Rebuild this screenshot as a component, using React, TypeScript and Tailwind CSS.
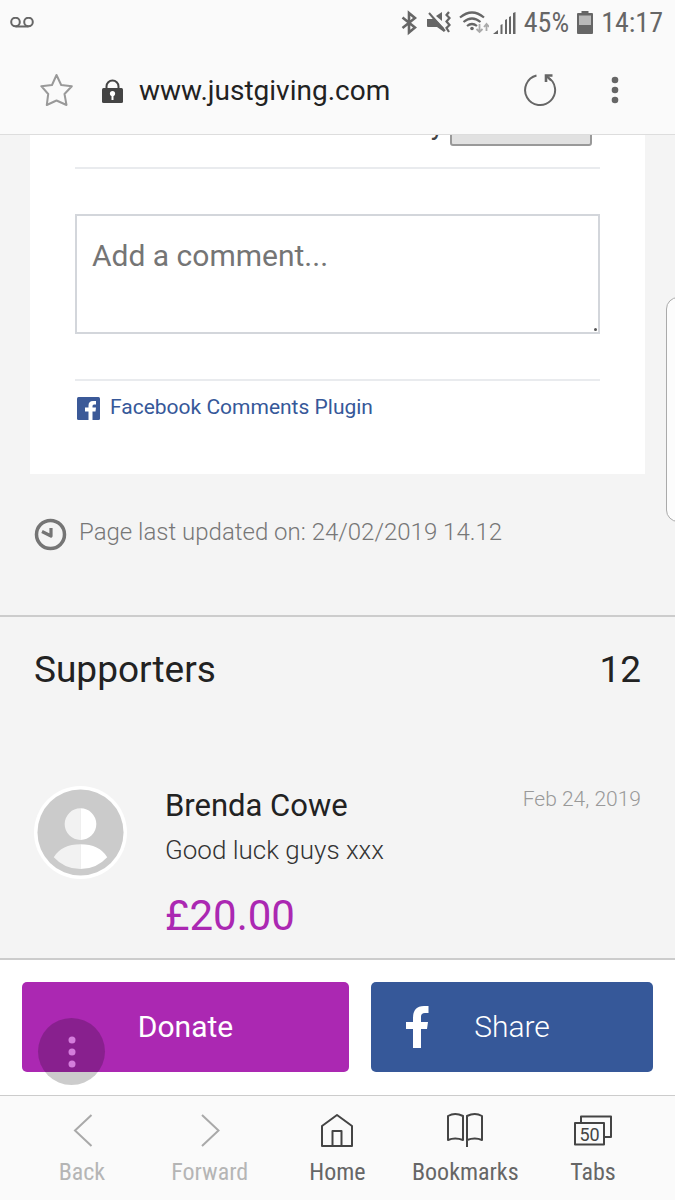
import type { ReactNode } from "react";

function StatusBar() {
  return (
    <div className="flex h-[46px] items-center justify-between pl-[10px] pr-3 text-[#666]">
      <svg width="24" height="12" viewBox="0 0 24 12" fill="none" stroke="currentColor" strokeWidth="2" aria-label="Voicemail">
        <circle cx="5.5" cy="5" r="4.3" />
        <circle cx="18.5" cy="5" r="4.3" />
        <path d="M5.500 9.500h13" />
      </svg>
      <div className="flex items-center gap-2">
        <svg width="16" height="26" viewBox="0 0 16 26" className="mr-[2px]" fill="none" stroke="currentColor" strokeWidth="2.600" aria-label="Bluetooth">
          <path d="M1.500 7.500L14 17.500l-6 5V3l6 5L1.500 18" />
        </svg>
        <svg width="24" height="24" viewBox="0 0 24 24" aria-label="Sound off, vibrate">
          <path d="M0 8h5l2-1 10 10v4l-7-5H1q-1 0-1-1z" fill="currentColor" />
          <path d="M9 5l6-4v9z" fill="currentColor" />
          <path d="M2 2l16 18" stroke="currentColor" strokeWidth="2" />
          <path d="M22 1l-2.500 3 3 3-3 3.500 3 3.500-3 3 2.500 4" fill="none" stroke="currentColor" strokeWidth="2.200" />
        </svg>
        <div className="flex items-center gap-1">
          <svg width="30" height="24" viewBox="0 0 30 24" fill="none" stroke="currentColor" strokeWidth="2.200" aria-label="Wi-Fi">
            <path d="M1 6.500Q13 -3.500 25 6.500M4.500 11Q13 4 21.500 11M8 15Q13 11 18 15" />
            <circle cx="13" cy="17.500" r="1.800" fill="currentColor" stroke="none" />
            <path d="M20.500 13v8m-3-3l3 3 3-3M27.500 20v-7m-2.500 3l2.500-3 2.500 3" stroke="#aaa" strokeWidth="1.800" />
          </svg>
          <svg width="23" height="24" viewBox="0 0 23 24" fill="currentColor" aria-label="Signal">
            <path d="M0 23l5-4v4zM7.500 14l2-1v10h-2zM12 9l2-1v15h-2zM16 6l2-1v18h-2zM20 2l2.500-1v22H20z" />
          </svg>
        </div>
        <span className="font-['Roboto_Condensed',Roboto,sans-serif] text-[28px] leading-8">45%</span>
        <svg width="16" height="24" viewBox="0 0 16 24" aria-label="Battery">
          <path d="M4.500 0h7v2H15q1 0 1 1v19q0 1-1 1H1q-1 0-1-1V3q0-1 1-1h3.500z" fill="currentColor" />
          <path d="M2 4.500h12V14H2z" fill="#b9b9b9" />
        </svg>
        <span className="font-['Roboto_Condensed',Roboto,sans-serif] text-[28px] leading-8">14:17</span>
      </div>
    </div>
  );
}

function AddressBar() {
  return (
    <div className="flex h-[88px] items-center pl-10 pr-14">
      <button type="button" aria-label="Add bookmark" className="text-[#999]">
        <svg width="33" height="34" viewBox="0 0 33 34" fill="none" stroke="currentColor" strokeWidth="2" strokeLinejoin="round">
          <path d="M16.500 2l4.700 10 10.600 1.200-7.300 7.800 2 11-10-4.500-9.700 4.500 1.400-11L1.300 13.200 12 12z" />
        </svg>
      </button>
      <div className="ml-[29px] flex min-w-0 flex-1 items-center gap-4 pt-[2px]">
        <svg width="21" height="25" viewBox="0 0 21 25" aria-label="Secure">
          <path d="M4.500 10V7.500a6 6 0 0 1 12 0V10" fill="none" stroke="#444" strokeWidth="2" />
          <rect y="9" width="21" height="15" rx="1.500" fill="#444" />
          <circle cx="10.500" cy="14.500" r="2.600" fill="#fff" />
          <path d="M9.500 14.500h2V21h-2z" fill="#fff" />
        </svg>
        <span className="text-[28px] leading-9 text-[#222]">www.justgiving.com</span>
      </div>
      <button type="button" aria-label="Reload" className="text-[#666]">
        <svg width="33" height="34" viewBox="0 0 33 34" fill="none" stroke="currentColor" strokeWidth="2">
          <path d="M12.500 2.500A15 15 0 1 0 23.500 4" />
          <path d="M28.500 2.500H22V9" strokeWidth="2.600" />
          <path d="M22 2.500l5 5" />
        </svg>
      </button>
      <button type="button" aria-label="More options" className="ml-[54px] text-[#666]">
        <svg width="8" height="28" viewBox="0 0 8 28" fill="currentColor">
          <circle cx="4" cy="4" r="3.300" />
          <circle cx="4" cy="14" r="3.300" />
          <circle cx="4" cy="24" r="3.300" />
        </svg>
      </button>
    </div>
  );
}

function Comments() {
  return (
    <section className="mx-[30px] bg-white px-[45px] pb-[52px]">
      <div className="flex h-[34px] items-end justify-end gap-[6px] overflow-hidden border-b-2 border-[#e9ebee] pb-[21px] pr-2">
        <label htmlFor="order" className="mb-[3px] text-[28px] leading-9 text-[#444]">Sort by</label>
        <select id="order" className="h-10 w-[142px] shrink-0 appearance-none rounded-[3px] border-2 border-[#999] bg-[#e1e1e1]" />
      </div>
      <div className="relative mt-[45px]">
        <textarea
          aria-label="Add a comment"
          placeholder="Add a comment..."
          className="block h-[120px] w-full resize-none rounded-none border-2 border-[#d3d6db] bg-white px-[15px] py-[22px] text-[30px] leading-9 placeholder:text-[#757575]"
        />
        <span className="absolute bottom-[3px] right-[3px] size-[3px] rounded-full bg-[#555]" />
      </div>
      <div className="mt-[45px] flex items-center gap-[10px] border-t-2 border-[#e9ebee] pb-[2px] pl-[2px] pt-3">
        <svg width="23" height="23" viewBox="0 0 23 23" className="mt-1" aria-hidden="true">
          <rect width="23" height="23" rx="1.500" fill="#3b5998" />
          <path d="M11.500 23v-8.500H8v-4h3.500V8.500q0-4.500 4.500-4.500h3v3.500h-2q-1.500 0-1.500 1.500v1.500h3.500l-.5 4h-3V23z" fill="#fff" />
        </svg>
        <a href="#plugin" className="text-[21px] leading-[26px] text-[#365899]">Facebook Comments Plugin</a>
      </div>
    </section>
  );
}

function Supporter() {
  return (
    <article className="mt-[91px] flex px-[34px]">
      <svg width="93" height="93" viewBox="0 0 94 94" className="shrink-0" aria-hidden="true">
        <circle cx="47" cy="47" r="47" fill="#fff" />
        <circle cx="47" cy="47" r="43.500" fill="#cbcbcb" />
        <path d="M47 22.500a16 16 0 0 0 0 32zM47 59q-19 0-27 13 11 12 27 12z" fill="#f2f2f2" />
        <path d="M47 22.500a16 16 0 0 1 0 32zM47 59q19 0 27 13-11 12-27 12z" fill="#fff" />
      </svg>
      <div className="ml-[38px] min-w-0 flex-1">
        <div className="flex items-start justify-between">
          <h3 className="text-[31px] leading-10 text-[#222]">Brenda Cowe</h3>
          <time dateTime="2019-02-24" className="text-[21px] font-light leading-[26px] text-[#999]">Feb 24, 2019</time>
        </div>
        <p className="mt-1 text-[26px] font-light leading-10 text-[#333]">Good luck guys xxx</p>
        <p className="mt-[21px] text-[42px] leading-[50px] text-[#ab28b2]">£20.00</p>
      </div>
    </article>
  );
}

function NavItem({ label, muted, children }: { label: string; muted?: boolean; children: ReactNode }) {
  return (
    <button type="button" className={muted ? "flex flex-1 flex-col items-center text-[#a9a9a9]" : "flex flex-1 flex-col items-center text-[#444]"}>
      <svg width="40" height="36" viewBox="0 0 40 36" fill="none" stroke="currentColor" strokeWidth="2" aria-hidden="true">
        {children}
      </svg>
      <span className={muted ? "mt-[10px] font-['Roboto_Condensed',Roboto,sans-serif] text-[24px] leading-7 text-[#b5b5b5]" : "mt-[10px] font-['Roboto_Condensed',Roboto,sans-serif] text-[24px] leading-7 text-[#666]"}>{label}</span>
    </button>
  );
}

export default function App() {
  return (
    <div className="relative flex min-h-screen flex-col overflow-hidden bg-[#f4f4f4] font-[Roboto,sans-serif]">
      <header className="border-b border-[#ddd] bg-[#fafafa]">
        <StatusBar />
        <AddressBar />
      </header>

      <main className="flex-1">
        <Comments />
        <p className="mt-10 flex items-start gap-3 px-[34px] text-[24px] font-light leading-9 text-[#777]">
          <svg width="33" height="33" viewBox="0 0 33 33" className="mt-1" fill="none" stroke="#757575" aria-hidden="true">
            <circle cx="16.500" cy="16.500" r="14" strokeWidth="3.500" />
            <path d="M8 13.500l9 4.500V10" strokeWidth="3.200" strokeLinejoin="round" />
          </svg>
          <span>Page last updated on: 24/02/2019 14.12</span>
        </p>
        <section className="mt-16 border-t-2 border-[#ccc] pt-7">
          <div className="flex justify-between px-[34px] text-[37px] leading-[50px] text-[#222]">
            <h2>Supporters</h2>
            <span>12</span>
          </div>
          <Supporter />
        </section>
      </main>

      <div className="relative flex gap-[22px] border-t-2 border-[#ccc] bg-white px-[22px] pb-[23px] pt-[22px]">
        <button type="button" className="h-[90px] flex-[327] rounded-[5px] bg-[#ab28b2] pb-[2px] text-[30px] text-white">Donate</button>
        <button type="button" className="relative h-[90px] flex-[282] rounded-[5px] bg-[#365899] pb-[2px] text-[30px] font-light text-white">
          <svg width="24" height="43" viewBox="0 0 24 43" fill="#fff" className="absolute left-[35px] top-6" aria-hidden="true">
            <path d="M7 42V23H0v-7h7v-4Q7 0 18 0h4.500v7H19q-4 0-4 3.500V16h7l-1 7H15v19z" />
          </svg>
          Share
        </button>
        <button type="button" aria-label="Assistant menu" className="absolute bottom-[10px] left-[38px] flex size-[67px] items-center justify-center rounded-full bg-black/20">
          <svg width="8" height="32" viewBox="0 0 8 32" fill="#d47ddc" aria-hidden="true">
            <circle cx="4" cy="4" r="3.500" />
            <circle cx="4" cy="16" r="3.500" />
            <circle cx="4" cy="28" r="3.500" />
          </svg>
        </button>
      </div>

      <nav className="flex border-t border-[#ccc] bg-[#fafafa] px-[18px] pb-[14px] pt-4">
        <NavItem label="Back" muted>
          <path d="M29.500 3L13 18.500 29.500 34" />
        </NavItem>
        <NavItem label="Forward" muted>
          <path d="M12 3l16.500 15.500L12 34" />
        </NavItem>
        <NavItem label="Home">
          <path d="M5 14L20 3l15 11v20H5zM15.500 34V19h9v15" strokeLinejoin="round" />
        </NavItem>
        <NavItem label="Bookmarks">
          <path d="M18 4Q10 0 3 4v24q7-3 15 0zM22 35V4q8-4 15 0v24q-7-3-15 0" strokeLinejoin="round" />
        </NavItem>
        <NavItem label="Tabs">
          <path d="M2 11h29v21.500H2zM8 10V4.500h30V25h-6" strokeLinejoin="round" />
          <text x="16.500" y="28.500" textAnchor="middle" fontSize="18" fill="currentColor" stroke="none">50</text>
        </NavItem>
      </nav>

      <div className="absolute left-[calc(100%-9px)] top-[297px] h-[225px] w-6 rounded-xl border border-[#aaa] bg-[#fcfcfc]" />
    </div>
  );
}
